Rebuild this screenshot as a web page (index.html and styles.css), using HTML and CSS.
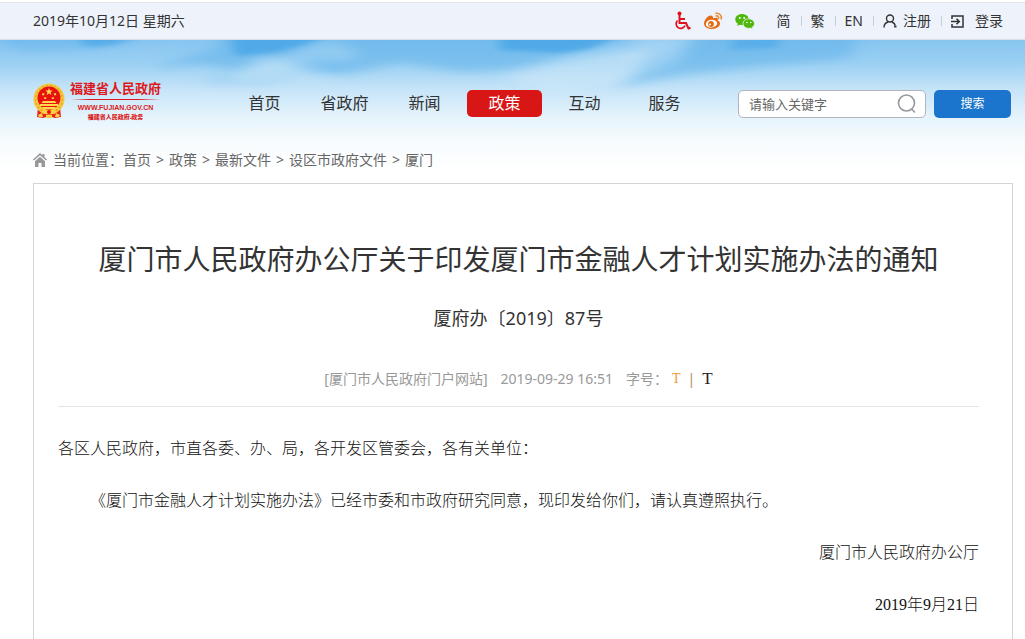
FILE: index.html
```html
<!DOCTYPE html>
<html lang="zh-CN">
<head>
<meta charset="utf-8">
<meta name="viewport" content="width=device-width, initial-scale=1">
<title>厦门市人民政府办公厅关于印发厦门市金融人才计划实施办法的通知</title>
<link rel="stylesheet" href="styles.css">
</head>
<body>
<div class="topbar">
  <span>2019年10月12日 星期六</span>
  <div class="tools">
    <div class="social">
      <a href="#" aria-label="无障碍"><svg width="17" height="20" viewBox="0 0 17 20" fill="none" stroke="#e1111b" stroke-width="2"><circle cx="5.5" cy="2.5" r="2" fill="#e1111b" stroke="none"/><path d="M5.5 4v8h6.500l2.500 5.500 2-.8M6 8h5"/><path d="M3.500 9.500a4.600 4.600 0 1 0 7.500 5" stroke-width="1.700"/></svg></a>
      <a href="#" aria-label="微博"><svg width="20" height="18" viewBox="0 0 20 18"><path fill="#e66a12" d="M7.500 3.500C5 3.500 1 8 1 11.500c0 3.300 3.700 5.500 7.700 5.500 5 0 8.300-2.900 8.300-5.500 0-1.600-1.200-2.500-2.400-2.900.7-1.800.2-2.700-.9-2.900-1-.2-2.300.1-3.600.6.3-1.700-.6-2.800-2.600-2.800z"/><ellipse cx="8.500" cy="11.700" rx="5.700" ry="3.900" fill="#fff" transform="rotate(-8 8.500 11.700)"/><circle cx="8" cy="12" r="2.900" fill="#e66a12"/><circle cx="7" cy="12.600" r="1" fill="#fff"/><path d="M13 1.200c3.600-.5 6 2.400 5.200 5.800M13 3.900c1.900-.3 3 1.100 2.600 2.700" fill="none" stroke="#ee8a36" stroke-width="1.500" stroke-linecap="round"/></svg></a>
      <a href="#" aria-label="微信"><svg width="20" height="17" viewBox="0 0 20 17"><path fill="#51b70b" d="M7 1C3.200 1 .3 3.400.3 6.400c0 1.800 1 3.300 2.600 4.300L2.300 13l2.500-1.300c.8.200 1.600.3 2.500.3 3.500 0 6.500-2.600 6.500-5.600S10.800 1 7 1z"/><path fill="#51b70b" stroke="#edf2fb" stroke-width=".8" d="M13.700 5.800c-3.200 0-5.700 2.100-5.700 4.800s2.500 4.800 5.700 4.800c.7 0 1.300-.1 1.900-.3l2.200 1.300-.6-2c1.400-.9 2.300-2.200 2.300-3.800 0-2.700-2.600-4.800-5.800-4.800z"/><g fill="#fff"><circle cx="4.800" cy="4.900" r="1"/><circle cx="9.200" cy="4.900" r="1"/><circle cx="11.900" cy="9.500" r=".8"/><circle cx="15.700" cy="9.500" r=".8"/></g></svg></a>
    </div>
    <a class="tool" href="#">简</a>
    <a class="tool" href="#">繁</a>
    <a class="tool" href="#">EN</a>
    <a class="tool" href="#"><svg width="14" height="14" viewBox="0 0 14 14" fill="none" stroke="#333" stroke-width="1.400"><circle cx="7" cy="4.500" r="3.500"/><path d="M1 13.500c0-3 1.500-4.800 4-5.500M9 8c1.800.7 2.900 2 3.300 3.500"/><path d="M11 12.500h2.500" stroke-width="1.800"/></svg>注册</a>
    <a class="tool login" href="#"><svg width="13" height="13" viewBox="0 0 13 13" fill="none" stroke="#333" stroke-width="1.500"><path d="M1 4V1h11v11H1V9M0 6.500h8M5.500 3.700l2.800 2.800-2.800 2.800"/></svg>登录</a>
  </div>
</div>

<div class="page">
  <svg class="sky" viewBox="0 0 1025 130" preserveAspectRatio="none" aria-hidden="true">
    <defs>
      <linearGradient id="air" x1="0" y1="0" x2="0" y2="1">
        <stop offset="0" stop-color="#87c5f0"/><stop offset=".18" stop-color="#9bd0f3"/><stop offset=".38" stop-color="#c6e4f8"/><stop offset=".6" stop-color="#e6f4fc"/><stop offset=".8" stop-color="#f8fcfe"/><stop offset="1" stop-color="#fff"/>
      </linearGradient>
      <filter id="soft" x="-20%" y="-80%" width="140%" height="260%"><feGaussianBlur stdDeviation="9 4"/></filter>
      <filter id="crisp" x="-20%" y="-80%" width="140%" height="260%"><feGaussianBlur stdDeviation="6 2"/></filter>
    </defs>
    <rect width="1025" height="130" fill="url(#air)"/>
    <g fill="#5db1ea" filter="url(#soft)">
      <path opacity=".45" d="M0-10H170L100 8 30 12 0 6z"/>
      <path opacity=".5" d="M150 28L215 8 225-10H340L275 22 245 32 200 24z"/>
      <path opacity=".4" d="M195 42L260 32 330 16 350 30 260 44z"/>
      <path opacity=".5" d="M320-10H640L560 16 510 30 460 32 400 22 350 34 320 30 360 14z"/>
      <path opacity=".5" d="M690-10H860L850 18 760 26 690 34 610 48 640 34 680 20z"/>
    </g>
    <g fill="#48a5e7" filter="url(#crisp)">
      <path opacity=".7" d="M75-10H150L115 5 85 7z"/>
      <path opacity=".8" d="M230-8H340L300 6 270 14 235 16z"/>
      <path opacity=".8" d="M500-8H630L590 9 560 13 500 10z"/>
      <path opacity=".6" d="M735-8H780L778 8 730 10z"/>
    </g>
    <g fill="#d4ebfa" filter="url(#soft)">
      <path opacity=".5" d="M235 34L265 16 290 22 330 42 230 44z"/>
      <path opacity=".5" d="M560 22L625 10 650 14 620 44 550 50 500 38z"/>
      <path opacity=".3" d="M640-4H700L670 14 620 24z"/>
    </g>
  </svg>

  <header class="header">
    <a class="logo" href="#" aria-label="福建省人民政府">
      <svg width="32" height="36" viewBox="0 0 32 36">
        <path fill="#e8211a" d="M5 24h22l1 10-6 1-6-2-6 2-6-1z"/>
        <circle cx="16" cy="16" r="15.500" fill="#f6c83b"/>
        <circle cx="16" cy="16" r="13.500" fill="none" stroke="#e9a529" stroke-width="1.500" stroke-dasharray="2 2"/>
        <circle cx="16" cy="15" r="11.500" fill="#e9110f"/>
        <path fill="#ffd84b" d="M16 5l1 2.600h2.800l-2.200 1.700.8 2.700-2.400-1.600-2.400 1.600.8-2.700-2.200-1.700H15zM9.500 10l2 .5-.5 2-2-.5zM20.800 10.500l2-.5.500 2-2 .5zM11.500 14l2 .4-.6 1.600-2-.3zM18.500 14.400l2-.4.600 1.700-2 .3zM10 18h12l1.500 2h-15zM7 21h18v2H7zM9 24h14l-1.500 2h-11z"/>
        <path fill="#f8cf42" d="M11 27h10l3 2-3 2H11l-3-2zM5 32l4-2 1 4H6zM27 32l-4-2-1 4h4zM13 32h6v3h-6z"/>
        <circle cx="16" cy="29" r="2" fill="#e9110f"/>
      </svg>
      <span class="logo-text">
        <strong>福建省人民政府</strong>
        <i class="logo-rule"></i>
        <span class="logo-url">WWW.FUJIAN.GOV.CN</span>
        <span class="logo-sub">福建省人民政府.政务</span>
      </span>
    </a>
    <nav class="nav">
      <a href="#">首页</a><a href="#">省政府</a><a href="#">新闻</a><a class="active" href="#">政策</a><a href="#">互动</a><a href="#">服务</a>
    </nav>
    <form class="search">
      <label class="field">
        <input type="text" placeholder="请输入关键字" aria-label="请输入关键字">
        <svg width="20" height="20" viewBox="0 0 20 20" fill="none" stroke="#96999d" stroke-width="1.600"><circle cx="9.500" cy="9" r="8"/><path d="M14.500 15l3.500 3.500"/></svg>
      </label>
      <button type="button">搜索</button>
    </form>
  </header>

  <nav class="crumbs" aria-label="当前位置">
    <svg width="14" height="14" viewBox="0 0 14 14" fill="#999"><path d="M7 0l2.500 2.300V1h2v3.200L14 6.600l-1 1L7 2.200 1 7.600l-1-1z"/><path d="M7 3.800l5 4.400V14H8.500v-4h-3v4H2V8.200z"/></svg>
    <span>当前位置：</span>
    <a href="#">首页</a><span class="sep">&gt;</span><a href="#">政策</a><span class="sep">&gt;</span><a href="#">最新文件</a><span class="sep">&gt;</span><a href="#">设区市政府文件</a><span class="sep">&gt;</span><a href="#">厦门</a>
  </nav>

  <main class="article">
    <h1>厦门市人民政府办公厅关于印发厦门市金融人才计划实施办法的通知</h1>
    <h2>厦府办〔2019〕87号</h2>
    <div class="meta">
      <span>[厦门市人民政府门户网站]</span>
      <time>2019-09-29 16:51</time>
      <span class="sizes">字号：<button class="size-small" type="button">T</button><span class="bar">|</span><button class="size-large" type="button">T</button></span>
    </div>
    <div class="content">
      <p>各区人民政府，市直各委、办、局，各开发区管委会，各有关单位：</p>
      <p class="indent">《厦门市金融人才计划实施办法》已经市委和市政府研究同意，现印发给你们，请认真遵照执行。</p>
      <p class="sign">厦门市人民政府办公厅</p>
      <p class="sign">2019年9月21日</p>
    </div>
  </main>
</div>
</body>
</html>
```
FILE: styles.css
```css
* { box-sizing: border-box; }

body {
  margin: 0;
  padding-top: 2px;
  background: #fff;
  color: #333;
  font: 14px/20px "Noto Sans", "Noto Sans CJK SC", sans-serif;
  text-spacing-trim: space-all;
}

a { color: inherit; text-decoration: none; }
svg { display: block; flex: none; }
button, input { font: inherit; margin: 0; padding: 0; }

.topbar {
  display: flex;
  justify-content: space-between;
  align-items: center;
  height: 38px;
  padding: 0 22px 0 33px;
  background: #edf2fb;
  border-top: 1px solid #e2e4e8;
  border-bottom: 1px solid #dadfe6;
}
.tools, .social { display: flex; align-items: center; }
.social { gap: 12px; margin-right: 12px; }
.tool {
  display: flex;
  align-items: center;
  gap: 6px;
  padding: 0 10px;
  line-height: 20px;
  position: relative;
}
.tool + .tool::before {
  content: "";
  position: absolute;
  left: 0;
  top: 5px;
  height: 10px;
  border-left: 1px solid #c9ced6;
}
.login { gap: 11px; padding-right: 0; }

.page { position: relative; padding: 0 12px 0 33px; }
.sky {
  position: absolute;
  z-index: -1;
  left: 0;
  top: 0;
  width: 100%;
  height: 130px;
}

.header { display: flex; align-items: center; padding-top: 40px; }
.logo { display: flex; align-items: center; gap: 5px; width: 191px; flex: none; }
.logo-text {
  display: flex;
  flex-direction: column;
  align-items: center;
  color: #dc1a20;
  white-space: nowrap;
}
.logo-text strong { font-size: 13px; line-height: 16px; }
.logo-rule {
  width: 90px;
  height: 1px;
  margin: 3px 0;
  background: linear-gradient(90deg, #dc1a2000, #dc1a20 20%, #dc1a20 75%, #dc1a2000);
}
.logo-url { font: bold 7px/10px "Liberation Sans", sans-serif; }
.logo-sub { font-size: 6px; line-height: 9px; font-weight: 900; }

.nav { display: flex; flex: none; margin-top: 5px; }
.nav a {
  width: 75px;
  margin-right: 5px;
  border-radius: 5px;
  font-size: 16px;
  line-height: 27px;
  text-align: center;
}
.nav a:first-child { margin-left: 3px; }
.nav .active { background: #d91616; color: #fff; }

.search {
  display: flex;
  gap: 8px;
  flex: 1;
  min-width: 0;
  margin: 6px 0 0 31px;
  padding-right: 2px;
}
.field {
  display: flex;
  align-items: center;
  flex: 1;
  min-width: 0;
  height: 28px;
  padding: 0 8px 0 10px;
  background: #fff;
  border: 1px solid #b1b4ba;
  border-radius: 5px;
}
.field input {
  flex: 1;
  min-width: 0;
  border: 0;
  outline: 0;
  background: none;
  font-size: 13px;
}
.field input::placeholder { color: #666; opacity: 1; }
.search button {
  flex: none;
  width: 77px;
  border: 0;
  border-radius: 5px;
  background: #1c75cc;
  color: #fff;
  font-size: 12px;
}

.crumbs { display: flex; align-items: center; margin: 28px 0 13px; color: #666; }
.crumbs svg { margin-right: 6px; }
.sep { margin: 0 5px; }

.article {
  padding: 54px 33px 30px 24px;
  background: #fff;
  border: 1px solid #d4d4d4;
}
h1, h2 { margin: 0; font-weight: 400; text-align: center; }
h1 { font-size: 28px; line-height: 42px; }
h2 { margin-top: 24px; font-size: 18px; line-height: 28px; }
.meta {
  display: flex;
  justify-content: center;
  gap: 13px;
  margin-top: 37px;
  padding-bottom: 17px;
  border-bottom: 1px solid #e3e3e3;
  color: #999;
  line-height: 20px;
}
.sizes { display: flex; align-items: center; }
.sizes button {
  border: 0;
  background: none;
  font-family: "Liberation Serif", serif;
  line-height: 20px;
}
.sizes .size-small { margin-left: 4px; color: #f09a3c; font-size: 14px; }
.sizes .size-large { color: #222; font-size: 17px; }
.bar { margin: 0 7px; color: #b58a62; }

.content {
  padding-top: 16px;
  color: #111;
  font: 300 16px/52px "Liberation Serif", "Noto Sans CJK SC", serif;
}
.content p { margin: 0; }
.indent { text-indent: 2em; }
.sign { text-align: right; }
```
